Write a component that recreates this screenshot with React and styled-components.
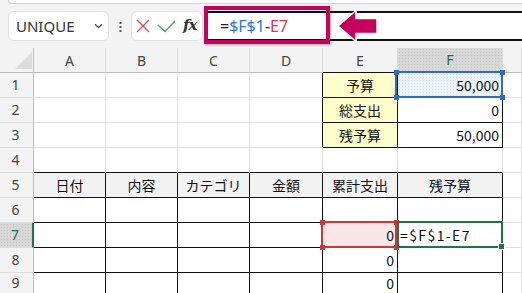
import styled, { createGlobalStyle } from "styled-components";

const GlobalStyle = createGlobalStyle`
  html, body {
    margin: 0;
    padding: 0;
    overflow: hidden;
  }
  body {
    background: #f3f3f3;
    font-family: "Noto Sans", "Liberation Sans", sans-serif;
  }
`;

const Screen = styled.div`
  position: relative;
  width: 522px;
  height: 293px;
  overflow: hidden;
  background: #f3f3f3;
`;

const Ribbon = styled.div`
  margin-left: 8px;
  height: 3px;
  background: #fff;
  border-left: 1px solid #d6d6d6;
  border-bottom: 1px solid #d6d6d6;
  border-bottom-left-radius: 5px;
`;

const FormulaRow = styled.div`
  display: flex;
  align-items: center;
  height: 44px;
  padding-left: 8px;
`;

const NameBox = styled.div`
  box-sizing: border-box;
  width: 101px;
  height: 30px;
  display: flex;
  align-items: center;
  justify-content: space-between;
  padding: 0 5px 0 7px;
  background: #fff;
  border: 1px solid #e0e0e0;
  border-radius: 6px;
  font-size: 15px;
  color: #333;
`;

const Dots = styled.div`
  width: 22px;
  display: flex;
  justify-content: center;
  padding-top: 3px;
`;

const FxGroup = styled.div`
  box-sizing: border-box;
  width: 72px;
  height: 30px;
  display: flex;
  align-items: center;
  gap: 7px;
  padding-left: 4px;
  background: #fff;
  border: 1px solid #e0e0e0;
  border-radius: 6px;
`;

const Fx = styled.span`
  font-family: "DejaVu Serif", "Liberation Serif", serif;
  font-style: italic;
  font-weight: bold;
  font-size: 15px;
  letter-spacing: -1px;
  color: #333;
  margin-top: -2px;
`;

const FormulaInput = styled.div`
  box-sizing: border-box;
  flex: 1;
  height: 30px;
  margin-left: 2px;
  display: flex;
  align-items: center;
  padding-left: 15px;
  background: #fff;
  border-top: 2px solid #111;
  border-bottom: 2px solid #111;
  font-size: 16px;
  color: #222;
`;

const Tok = styled.span`
  color: ${(p) => p.$c || "#222"};
`;

const Highlight = styled.div`
  position: absolute;
  left: 204px;
  top: 6px;
  width: 126px;
  height: 38px;
  box-sizing: border-box;
  border: 4px solid #c6005d;
  box-shadow: 1px 1px 2px rgba(0, 0, 0, 0.35);
`;

const Arrow = styled.svg`
  position: absolute;
  left: 335px;
  top: 8px;
`;

/* header + rows 1-8 at full height, row 9 runs past the window edge */
const Sheet = styled.div`
  position: relative;
  display: grid;
  grid-template-columns: 34px 72px 72px 72px 73px 75px 105px 1fr;
  grid-template-rows: repeat(9, 25px) 21px;
  background: #fff;
`;

const Corner = styled.div`
  box-sizing: border-box;
  display: flex;
  align-items: flex-end;
  justify-content: flex-end;
  padding: 0 1px 3px 0;
  background: #f3f3f3;
  border-right: 1px solid #bdbdbd;
  border-bottom: 1px solid #bdbdbd;
`;

const Triangle = styled.div`
  width: 0;
  height: 0;
  border-left: 17px solid transparent;
  border-bottom: 17px solid #dcdcdc;
`;

const selectedBg = `
  background-color: #d8d8d8;
  background-image: radial-gradient(#c4c4c4 0.7px, transparent 0.9px);
  background-size: 3px 3px;
`;

const ColHead = styled.div`
  box-sizing: border-box;
  display: flex;
  align-items: center;
  justify-content: center;
  background: #f3f3f3;
  ${(p) => p.$active && selectedBg}
  border-right: 1px solid #dadada;
  border-bottom: ${(p) =>
    p.$active ? "2px solid #217346" : `1px solid ${p.$line || "#bdbdbd"}`};
  font-size: 14px;
  color: ${(p) => (p.$active ? "#1d6b41" : "#444")};
`;

const RowHead = styled.div`
  box-sizing: border-box;
  display: flex;
  align-items: center;
  justify-content: center;
  padding-right: 2px;
  background: #f3f3f3;
  ${(p) => p.$active && selectedBg}
  border-right: ${(p) => (p.$active ? "2px solid #217346" : "1px solid #bdbdbd")};
  border-bottom: 1px solid #dcdcdc;
  font-size: 14px;
  line-height: 1;
  color: ${(p) => (p.$active ? "#1d6b41" : "#444")};
`;

const Cell = styled.div`
  box-sizing: border-box;
  display: flex;
  align-items: center;
  justify-content: ${(p) =>
    p.$align === "right" ? "flex-end" : p.$align === "left" ? "flex-start" : "center"};
  padding: ${(p) => (p.$align === "left" ? "0 0 0 2px" : "0 3px")};
  background: ${(p) => p.$bg || "#fff"};
  border-right: 1px solid ${(p) => p.$right || "#e1e1e1"};
  border-bottom: 1px solid ${(p) => p.$bottom || "#e1e1e1"};
  font-family: "Noto Sans CJK JP", sans-serif;
  font-size: 14px;
  line-height: 1;
  letter-spacing: ${(p) => (p.$spaced ? "1.4px" : "0")};
  color: #111;
  white-space: nowrap;
  overflow: hidden;
`;

const RefBox = styled.div`
  position: absolute;
  box-sizing: border-box;
  left: ${(p) => p.$x}px;
  top: ${(p) => p.$y}px;
  width: ${(p) => p.$w}px;
  height: ${(p) => p.$h}px;
  border: 2px solid ${(p) => p.$color};
`;

const Knob = styled.div`
  position: absolute;
  width: 5px;
  height: 5px;
  background: ${(p) => p.$color};
  ${(p) => (p.$top ? "top: -3.5px;" : "bottom: -3.5px;")}
  ${(p) => (p.$left ? "left: -3.5px;" : "right: -3.5px;")}
  ${(p) => p.$outline && "border: 1px solid #fff;"}
`;

const COLS = ["A", "B", "C", "D", "E", "F"];
const BLACK = "#111";

const content = {
  E1: { t: "予算" },
  F1: { t: "50,000", a: "right" },
  E2: { t: "総支出" },
  F2: { t: "0", a: "right" },
  E3: { t: "残予算" },
  F3: { t: "50,000", a: "right" },
  A5: { t: "日付" },
  B5: { t: "内容" },
  C5: { t: "カテゴリ" },
  D5: { t: "金額" },
  E5: { t: "累計支出" },
  F5: { t: "残予算" },
  E7: { t: "0", a: "right" },
  F7: { t: "=$F$1-E7", a: "left", spaced: true },
  E8: { t: "0", a: "right" },
  E9: { t: "0", a: "right" },
};

const cellStyle = (r, c) => {
  const ci = COLS.indexOf(c);
  const topBox = r >= 1 && r <= 3;
  const table = r >= 5 && r <= 9 && ci >= 0;
  let right;
  let bottom;
  let bg;
  if ((topBox && ci >= 3) || table) right = BLACK;
  if ((topBox && ci >= 4) || (r >= 4 && r <= 9 && ci >= 0)) bottom = BLACK;
  if (topBox && c === "E") bg = "#ffffcc";
  if (r === 5 && ci >= 0) bg = "#f2f2f2";
  if (c === "E" && r === 7) bg = "#f9e6e6";
  if (c === "F" && r === 1)
    bg = "#edf3f4 radial-gradient(#d0dfe2 0.7px, transparent 0.9px) 0 0 / 3px 3px";
  return { right, bottom, bg };
};

const Corners = ({ color }) => (
  <>
    <Knob $color={color} $top $left />
    <Knob $color={color} $top />
    <Knob $color={color} $left />
    <Knob $color={color} />
  </>
);

const Row = ({ r }) => (
  <>
    <RowHead $active={r === 7}>{r}</RowHead>
    {COLS.map((c) => {
      const id = `${c}${r}`;
      const s = cellStyle(r, c);
      const d = content[id];
      return (
        <Cell
          key={id}
          $right={s.right}
          $bottom={s.bottom}
          $bg={s.bg}
          $align={d?.a}
          $spaced={d?.spaced}
        >
          {d?.t}
        </Cell>
      );
    })}
    <Cell />
  </>
);

const App = () => {
  const rows = [1, 2, 3, 4, 5, 6, 7, 8, 9];
  return (
    <Screen>
      <GlobalStyle />
      <Ribbon />
      <FormulaRow>
        <NameBox>
          <span>UNIQUE</span>
          <svg width="9" height="6" viewBox="0 0 9 6">
            <path d="M1 1.2 L4.5 4.6 L8 1.2" fill="none" stroke="#444" strokeWidth="1.2" />
          </svg>
        </NameBox>
        <Dots>
          <svg width="3" height="11" viewBox="0 0 3 11">
            <rect x="0.5" y="0" width="2" height="2" fill="#555" />
            <rect x="0.5" y="4" width="2" height="2" fill="#555" />
            <rect x="0.5" y="8" width="2" height="2" fill="#555" />
          </svg>
        </Dots>
        <FxGroup>
          <svg width="14" height="14" viewBox="0 0 14 14">
            <path d="M1 1 L13 13 M13 1 L1 13" stroke="#e04a4f" strokeWidth="1.4" fill="none" />
          </svg>
          <svg width="19" height="14" viewBox="0 0 19 14">
            <path d="M1 6 L8 12.5 L18 2" stroke="#4aa35c" strokeWidth="1.3" fill="none" />
          </svg>
          <Fx>fx</Fx>
        </FxGroup>
        <FormulaInput>
          <Tok>=</Tok>
          <Tok $c="#2f75d6">$F$1</Tok>
          <Tok>-</Tok>
          <Tok $c="#d23a3f">E7</Tok>
        </FormulaInput>
      </FormulaRow>
      <Highlight />
      <Arrow width="46" height="38" viewBox="0 0 46 38">
        <polygon
          points="3,18 21,2.5 21,10.5 42,10.5 42,25.5 21,25.5 21,33.5"
          fill="#c6005d"
          stroke="#fff"
          strokeWidth="1.5"
        />
      </Arrow>
      <Sheet>
        <Corner>
          <Triangle />
        </Corner>
        {COLS.map((c) => (
          <ColHead key={c} $active={c === "F"} $line={c === "E" ? BLACK : undefined}>
            {c}
          </ColHead>
        ))}
        <ColHead />
        {rows.map((r) => (
          <Row key={r} r={r} />
        ))}
        <RefBox $x={395} $y={23} $w={108} $h={27} $color="#2f6ac6">
          <Corners color="#2f6ac6" />
        </RefBox>
        <RefBox $x={321} $y={173} $w={76} $h={27} $color="#c8393e">
          <Corners color="#c8393e" />
        </RefBox>
        <RefBox $x={397} $y={173} $w={106} $h={27} $color="#217346">
          <Knob $color="#217346" $outline />
        </RefBox>
      </Sheet>
    </Screen>
  );
};

export default App;
